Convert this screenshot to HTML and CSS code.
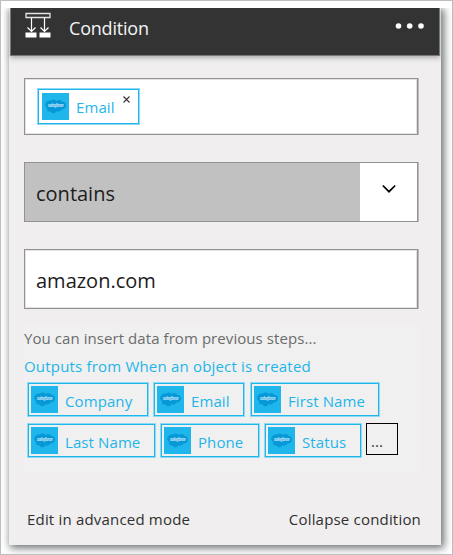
FILE: index.html
```
<!DOCTYPE html>
<html lang="en">
<head>
<meta charset="utf-8">
<title>Condition</title>
<link rel="stylesheet" href="styles.css">
</head>
<body>
<svg class="defs" aria-hidden="true">
  <symbol id="cloud" viewBox="0 0 27 27">
    <rect width="27" height="27" fill="#1fb7eb"/>
    <path d="M3.200 12C3.200 9 6 7 9 7.500C11 6 13.500 6.500 14.500 8C17 6 19.500 7 20.500 9C23 8.700 24.500 10.500 24 13C23.600 15.500 21.500 17 19.500 16.500C18.500 18.500 16 19.200 14.500 18.200C13 21 9.500 20.800 8.500 18.500C6 19 4.300 17 5 15C4 14.300 3.200 13.200 3.200 12Z" fill="#0798d8"/>
    <text x="5.800" y="14.300" textLength="16" font-size="5" font-weight="bold" font-style="italic" fill="#a8dcf4">salesforce</text>
  </symbol>
</svg>
<main class="frame">
  <div class="viewport">
    <section class="card">
      <header class="header">
        <svg class="header-icon" width="26" height="26" viewBox="0 0 26 26">
          <path d="M1 1.500H25V5.500H1Z" fill="none" stroke="#e4e4e4" stroke-width="1.300"/>
          <path d="M6.500 6V19M2.500 15.500L6.500 19.500L10.500 15.500M19.500 6V19M15.500 15.500L19.500 19.500L23.500 15.500" fill="none" stroke="#fff" stroke-width="1.200"/>
          <path d="M.5 20.500H11.500V25.500H.5ZM14.500 20.500H25.500V25.500H14.500Z" fill="#fff"/>
        </svg>
        <h1 class="title">Condition</h1>
        <svg class="more" width="30" height="8" viewBox="0 0 30 8" fill="#fff"><circle cx="3.500" cy="4" r="2.800"/><circle cx="14.700" cy="4" r="2.800"/><circle cx="26" cy="4" r="2.800"/></svg>
      </header>
      <div class="body">
        <div class="field field-tokens">
          <span class="token selected"><svg class="logo"><use href="#cloud"/></svg><span>Email</span>
            <svg class="remove" width="7" height="7" viewBox="0 0 7 7"><path d="M.5 .5L6.500 6.500M6.500 .5L.5 6.500" stroke="#333" stroke-width="1.100"/></svg></span>
        </div>
        <div class="field select">
          <span class="value contains">contains</span>
          <span class="arrow"><svg width="16" height="10" viewBox="0 0 16 10"><path d="M1.800 1.500L8 7.700L14.200 1.500" fill="none" stroke="#000" stroke-width="1.700"/></svg></span>
        </div>
        <div class="field"><span class="value amazon">amazon.com</span></div>
        <div class="panel">
          <p class="hint">You can insert data from previous steps...</p>
          <p class="source">Outputs from When an object is created</p>
          <div class="row">
            <span class="token company"><svg class="logo"><use href="#cloud"/></svg><span>Company</span></span>
            <span class="token email"><svg class="logo"><use href="#cloud"/></svg><span>Email</span></span>
            <span class="token first"><svg class="logo"><use href="#cloud"/></svg><span>First Name</span></span>
          </div>
          <div class="row">
            <span class="token last"><svg class="logo"><use href="#cloud"/></svg><span>Last Name</span></span>
            <span class="token phone"><svg class="logo"><use href="#cloud"/></svg><span>Phone</span></span>
            <span class="token status"><svg class="logo"><use href="#cloud"/></svg><span>Status</span></span>
            <span class="overflow">...</span>
          </div>
        </div>
        <footer class="footer"><span class="edit">Edit in advanced mode</span><span class="collapse">Collapse condition</span></footer>
      </div>
    </section>
  </div>
</main>
</body>
</html>
```
FILE: styles.css
```
* { box-sizing: border-box; }
body { margin: 0; font-family: "Open Sans", "Noto Sans", sans-serif; font-size: 15px; }
h1, p { margin: 0; font-weight: 400; }
.defs { display: none; }
.frame { width: 453px; height: 555px; border: 1px solid #bdbdbd; background: #fff; padding-top: 7px; }
.viewport { height: 546px; overflow: hidden; padding: 0 11px 9px 8px; }
.card { height: 537px; background: #f0eeef; box-shadow: 2px 2px 8px 1px #6a7072; display: flex; flex-direction: column; }
.header { height: 48px; margin: 0 1px; background: #333; border: solid #777; border-width: 0 1px 1px; display: flex; align-items: flex-start; box-shadow: 0 2px 5px #aaa; padding-left: 14px; }
.header-icon { margin-top: 4px; }
.title { font-size: 18px; line-height: 24px; color: #f4f4f4; margin: 8px 0 0 18px; letter-spacing: -.2px; }
.more { margin: 14px 14px 0 auto; }
.body { padding: 22px 20px 0 15px; flex: 1; display: flex; flex-direction: column; }
.field { width: 394px; height: 60px; border: 1px solid #929292; background: #fff; box-shadow: inset 0 0 0 1px #e2e2e2, 1px 0 #bbb; display: flex; align-items: stretch; margin-bottom: 27px; flex: none; }
.field-tokens { height: 57px; padding: 9px 12px; }
.select { background: #c1c1c1; box-shadow: 1px 0 #bbb; }
.value { font-size: 20px; line-height: 61px; padding-left: 11px; color: #1c1c1c; }
.arrow { width: 57px; margin-left: auto; background: #fff; display: flex; justify-content: center; align-items: flex-start; padding-top: 21px; }
.token { height: 35px; border: 1px solid #8edaf4; box-shadow: inset 0 0 0 1px #1fb7eb; color: #1fb5e9; display: flex; padding: 3px; line-height: 31px; white-space: nowrap; letter-spacing: .1px; }
.logo { width: 27px; height: 27px; flex: none; margin-right: 7px; }
.selected { width: 103px; height: 37px; padding: 4px; }
.selected span { line-height: 29px; }
.remove { margin: 3px 0 0 8px; }
.panel { background: #f0f0f0; height: 149px; margin-top: -11px; width: 395px; flex: none; }
.hint { line-height: 24px; height: 26px; padding-top: 1px; color: #6c6c6c; white-space: nowrap; letter-spacing: .07px; }
.source { line-height: 24px; height: 31px; padding-top: 3px; color: #1fb5e9; white-space: nowrap; letter-spacing: .19px; }
.row { display: flex; gap: 4px; margin: 0 0 6px 3px; align-items: flex-start; }
.company { width: 122px; }
.email { width: 92px; }
.first { width: 130px; margin-left: 1px; }
.last { width: 129px; }
.phone { width: 100px; }
.status { width: 98px; }
.overflow { width: 32px; height: 32px; border: 1.500px solid #000; padding-left: 4px; line-height: 34px; color: #333; }
.footer { margin-top: auto; padding: 0 0 14px 3px; display: flex; justify-content: space-between; line-height: 24px; color: #303030; letter-spacing: .19px; }
```
